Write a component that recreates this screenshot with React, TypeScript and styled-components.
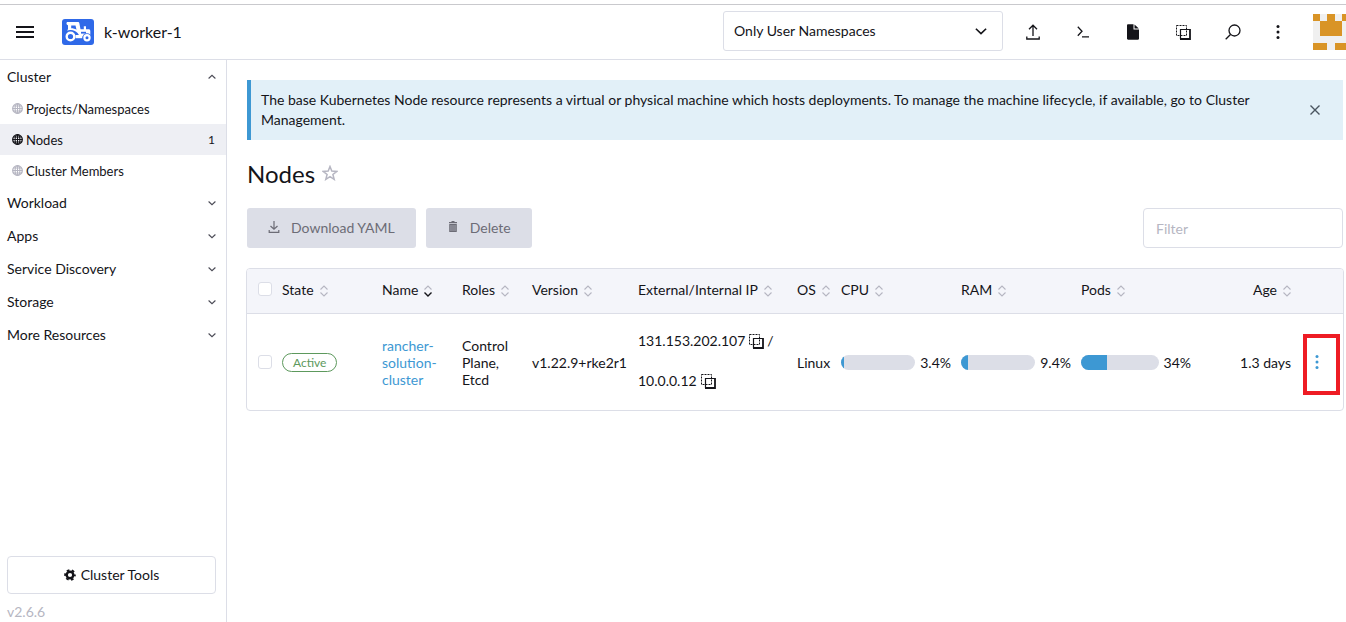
import React from "react";
import styled, { createGlobalStyle } from "styled-components";

const color = {
  text: "#141419",
  border: "#dcdee7",
  muted: "#b6b6c2",
  blue: "#3d98d3",
  green: "#5d995d",
  hoverRow: "#eeeff4",
  disabledText: "#6c6c76",
};

const GlobalStyle = createGlobalStyle`
  *, *::before, *::after { box-sizing: border-box; }
  body {
    margin: 0;
    background: #fff;
    color: ${color.text};
    font-family: Lato, "Open Sans", sans-serif;
    font-size: 14px;
    line-height: 20px;
  }
  button, input, select { font: inherit; color: inherit; margin: 0; }
  svg { display: block; flex: none; }
`;

const Page = styled.div`
  display: flex;
  flex-direction: column;
  min-height: 100vh;
  padding-top: 4px;
`;

const Header = styled.header`
  display: flex;
  align-items: center;
  height: 56px;
  border-top: 1px solid #c9c9cd;
  border-bottom: 1px solid ${color.border};
`;

const IconButton = styled.button<{ $width?: number }>`
  display: flex;
  align-items: center;
  justify-content: center;
  width: ${(p) => p.$width ?? 50}px;
  height: 40px;
  padding: 0;
  border: 0;
  background: none;
  cursor: pointer;
`;

const Brand = styled.a`
  display: flex;
  align-items: center;
  gap: 10px;
  margin-left: 12px;
  font-size: 16px;
  color: inherit;
  text-decoration: none;
`;

const HeaderTools = styled.div`
  display: flex;
  align-items: center;
  margin-left: auto;
`;

const NamespaceField = styled.div`
  position: relative;
  width: 280px;
  margin-right: 5px;
  margin-bottom: 2px;
  svg { position: absolute; right: 16px; top: 14px; pointer-events: none; }
`;

const NamespaceSelect = styled.select`
  appearance: none;
  width: 100%;
  height: 40px;
  padding: 0 40px 0 10px;
  border: 1px solid ${color.border};
  border-radius: 3px;
  background: #fff;
`;

const Avatar = styled.div`
  width: 33px;
  height: 36px;
  margin-left: 15px;
  overflow: hidden;
`;

const Body = styled.div`
  display: flex;
  flex: 1;
`;

const Sidebar = styled.nav`
  display: flex;
  flex-direction: column;
  flex: none;
  width: 227px;
  border-right: 1px solid ${color.border};
`;

const GroupButton = styled.button`
  display: flex;
  align-items: center;
  justify-content: space-between;
  width: 100%;
  height: 33px;
  padding: 0 10px 0 7px;
  border: 0;
  background: none;
  text-align: left;
  cursor: pointer;
`;

const ItemList = styled.ul`
  margin: 0;
  padding: 0;
  list-style: none;
`;

const ItemLink = styled.a<{ $active?: boolean }>`
  display: flex;
  align-items: center;
  gap: 3px;
  height: 31px;
  padding: 0 11px 0 12px;
  font-size: 13px;
  color: ${color.text};
  text-decoration: none;
  background: ${(p) => (p.$active ? color.hoverRow : "transparent")};
  svg { color: ${(p) => (p.$active ? color.text : color.muted)}; }
`;

const ItemCount = styled.span`
  margin-left: auto;
  font-size: 12px;
`;

const SidebarFooter = styled.div`
  margin-top: auto;
  padding: 0 10px 0 7px;
`;

const ToolsButton = styled.button`
  display: flex;
  align-items: center;
  justify-content: center;
  gap: 5px;
  width: 100%;
  height: 38px;
  border: 1px solid ${color.border};
  border-radius: 4px;
  background: #fff;
  cursor: pointer;
`;

const Version = styled.div`
  padding-top: 8px;
  color: ${color.muted};
`;

const Main = styled.main`
  flex: 1;
  min-width: 0;
  padding: 20px 3px 20px 20px;
`;

const Banner = styled.div`
  display: flex;
  align-items: center;
  justify-content: space-between;
  gap: 30px;
  padding: 10px 20px 10px 10px;
  border-left: 4px solid ${color.blue};
  background: #e2f0f8;
`;

const Title = styled.h1`
  display: flex;
  align-items: center;
  gap: 7px;
  margin: 20px 0;
  font-size: 24px;
  font-weight: 400;
  line-height: 28px;
  svg { margin-bottom: 2px; }
`;

const Toolbar = styled.div`
  display: flex;
  align-items: center;
  gap: 10px;
  margin-bottom: 20px;
`;

const ActionButton = styled.button`
  display: flex;
  align-items: center;
  gap: 10px;
  height: 40px;
  padding: 0 21px 0 20px;
  border: 0;
  border-radius: 3px;
  background: ${color.border};
  color: ${color.disabledText};
  svg { margin-bottom: 2px; }
`;

const FilterInput = styled.input`
  width: 200px;
  height: 40px;
  margin-left: auto;
  padding: 0 12px;
  border: 1px solid ${color.border};
  border-radius: 4px;
  background: #fff;
  &::placeholder { color: ${color.muted}; opacity: 1; }
`;

const TableFrame = styled.div`
  margin: 0 -1px;
  border: 1px solid ${color.border};
  border-radius: 4px;
  overflow: hidden;
`;

const Table = styled.table`
  width: 100%;
  table-layout: fixed;
  border-spacing: 0;
  line-height: 17px;
`;

const Col = styled.col<{ $width?: number }>`
  width: ${(p) => (p.$width ? `${p.$width}px` : "auto")};
`;

const HeadCell = styled.th<{ $right?: boolean }>`
  height: 45px;
  padding: 0 5px 4px;
  border-bottom: 1px solid ${color.border};
  background: #f4f5fa;
  font-weight: 400;
  text-align: left;
  button { margin-left: ${(p) => (p.$right ? "auto" : "0")}; }
`;

const SortButton = styled.button`
  display: flex;
  align-items: center;
  gap: 6px;
  padding: 0;
  border: 0;
  background: none;
  white-space: nowrap;
  svg { margin-top: 3px; }
`;

const Cell = styled.td<{ $right?: boolean }>`
  position: relative;
  height: 96px;
  padding: 0 5px;
  text-align: ${(p) => (p.$right ? "right" : "left")};
`;

const CheckHeadCell = styled(HeadCell)`
  padding: 0 0 4px 11px;
`;

const CheckCell = styled(Cell)`
  padding: 0 0 0 11px;
`;

const Checkbox = styled.input`
  display: block;
  appearance: none;
  width: 14px;
  height: 14px;
  margin: 0;
  border: 1px solid ${color.border};
  border-radius: 3px;
  background: #fff;
`;

const Badge = styled.span`
  display: inline-block;
  padding: 0 10px;
  border: 1px solid ${color.green};
  border-radius: 10px;
  color: ${color.green};
  font-size: 12px;
`;

const NodeLink = styled.a`
  color: ${color.blue};
  text-decoration: none;
`;

const IpCell = styled(Cell)`
  padding-bottom: 4px;
`;

const IpLine = styled.div`
  display: flex;
  align-items: center;
  gap: 3px;
  height: 40px;
`;

const CopyButton = styled.button`
  padding: 2px 0 0;
  border: 0;
  background: none;
  cursor: pointer;
`;

const Usage = styled.div`
  display: flex;
  align-items: center;
  gap: 5px;
`;

const Track = styled.div`
  flex: 1;
  height: 15px;
  border-radius: 8px;
  background: ${color.border};
  overflow: hidden;
`;

const Fill = styled.div`
  height: 100%;
  background: ${color.blue};
`;

const RowMenuButton = styled(IconButton)`
  color: ${color.blue};
`;

const Highlight = styled.div`
  position: absolute;
  top: 20px;
  left: 7px;
  width: 37px;
  height: 61px;
  border: 4px solid #ee1c24;
  pointer-events: none;
`;

const MenuIcon = () => (
  <svg width="18" height="12" viewBox="0 0 18 12" fill="currentColor">
    <path d="M0 0h18v2H0zM0 5h18v2H0zM0 10h18v2H0z" />
  </svg>
);

const TractorLogo = () => (
  <svg width="32" height="26" viewBox="0 0 32 26">
    <rect width="32" height="26" rx="3" fill="#2f69e8" />
    <path
      d="M5.500 3h10.700c.6 0 1 .4 1.100 1l1.200 6.200h3.300V7.300h2.200v2.900h2.600c1 0 1.700.7 1.700 1.700v5.300H17.500c0 0-2-6.200-9-6.200-1.500 0-2.600.3-3.300.8l.8-1.800V6.200c-1 0-1.500-1-1.500-1.700C4.500 3.500 4.800 3 5.500 3z"
      fill="#fff"
    />
    <path d="M9.200 6.500h4.300l1 4.200c-1.500-1-3.300-1.500-5.300-1.500z" fill="#2f69e8" />
    <path d="M19 12.800h5v1.800h-5z" fill="#2f69e8" />
    <circle cx="8.500" cy="17.500" r="6" fill="#2f69e8" />
    <circle cx="8.500" cy="17.500" r="3.800" fill="none" stroke="#fff" strokeWidth="2.400" />
    <path d="M13.500 16h7v3.200h-7z" fill="#fff" />
    <circle cx="25" cy="18.800" r="4.600" fill="#2f69e8" />
    <circle cx="25" cy="18.800" r="2.600" fill="none" stroke="#fff" strokeWidth="2.200" />
  </svg>
);

const Chevron = ({ size = 8, up = false, bold = false }: { size?: number; up?: boolean; bold?: boolean }) => (
  <svg width={size} height={size} viewBox="0 0 8 8" fill="none" stroke={bold ? color.text : "#4a4a55"} strokeWidth="1.100">
    <path d={up ? "M.6 5.500 4 2.300l3.400 3.200" : "M.6 2.500 4 5.700l3.400-3.200"} />
  </svg>
);

const UploadIcon = () => (
  <svg width="14" height="16" viewBox="0 0 14 16" fill="none" stroke="currentColor" strokeWidth="1.300">
    <path d="M7 12V1.500M3 5.200l4-4 4 4M.8 12.500V15h12.400v-2.500" />
  </svg>
);

const ShellIcon = () => (
  <svg width="12" height="12" viewBox="0 0 12 12" fill="none" stroke="currentColor" strokeWidth="1.300">
    <path d="M.8.8 5 5.300.8 9.800M5 10.800h7" />
  </svg>
);

const FileIcon = () => (
  <svg width="12" height="16" viewBox="0 0 12 16" fill="currentColor">
    <path d="M0 1.500C0 .6.5.3 1.200.3H6.500V5.500H12v9c0 .8-.4 1.200-1.200 1.200H1.200C.4 15.700 0 15.300 0 14.500zM7.500.5 11.800 4.600H7.500z" />
  </svg>
);

const CopyIcon = () => (
  <svg width="16" height="16" viewBox="0 0 16 16" fill="none" stroke="currentColor">
    <rect x="1.500" y="1.500" width="10" height="10" strokeWidth="1" strokeDasharray="2 1" />
    <path d="M5.500 15V5.500H15" strokeWidth="1.200" />
    <path d="M15 5v10H5" strokeWidth="1.800" />
  </svg>
);

const SearchIcon = () => (
  <svg width="16" height="16" viewBox="0 0 16 16" fill="none" stroke="currentColor" strokeWidth="1.300">
    <circle cx="9.500" cy="6.500" r="5.500" />
    <path d="M5.500 10.500.7 15.300" />
  </svg>
);

const DotsIcon = () => (
  <svg width="4" height="14" viewBox="0 0 4 14" fill="currentColor">
    <circle cx="2" cy="1.600" r="1.500" />
    <circle cx="2" cy="7" r="1.500" />
    <circle cx="2" cy="12.400" r="1.500" />
  </svg>
);

const Identicon = () => (
  <svg width="36" height="36" viewBox="0 0 5 5" shapeRendering="crispEdges">
    <rect width="5" height="5" fill="#f0f0f0" />
    <path d="M0 0h1v1H0zM2 0h1v1h1v2H1V1h1zM4 0h1v1H4zM0 4h2v1H0zM3 4h2v1H3z" fill="#d99426" />
  </svg>
);

const GlobeIcon = () => (
  <svg width="11" height="11" viewBox="0 0 11 11" fill="none" stroke="currentColor">
    <circle cx="5.500" cy="5.500" r="4.800" strokeWidth="1.300" />
    <ellipse cx="5.500" cy="5.500" rx="2.400" ry="4.800" strokeWidth="1.100" />
    <path d="M5.500.5v10M.8 5.500h9.400M1.500 3h8M1.500 8h8" />
  </svg>
);

const GearIcon = () => (
  <svg width="12" height="12" viewBox="0 0 12 12" fill="none" stroke="currentColor">
    <circle cx="6" cy="6" r="3.300" strokeWidth="2.400" />
    <circle cx="6" cy="6" r="4.900" strokeWidth="1.800" strokeDasharray="2.600 2.530" strokeDashoffset="1.300" />
  </svg>
);

const CloseIcon = () => (
  <svg width="10" height="10" viewBox="0 0 10 10" fill="none" stroke="#4a5560" strokeWidth="1.400">
    <path d="m.5.5 9 9M9.500.5l-9 9" />
  </svg>
);

const StarIcon = () => (
  <svg width="16" height="16" viewBox="0 0 16 16" fill="none" stroke={color.muted} strokeWidth="1.500">
    <path d="m8 1.500 1.800 4.600 5 .3-3.900 3.100 1.300 4.900L8 11.700l-4.200 2.700 1.300-4.900L1.200 6.400l5-.3z" />
  </svg>
);

const DownloadIcon = () => (
  <svg width="14" height="14" viewBox="0 0 14 14" fill="none" stroke="currentColor" strokeWidth="1.200">
    <path d="M7 1v8M3.500 6 7 9.300 10.500 6M2.200 10v2.300h9.600V10" />
  </svg>
);

const TrashIcon = () => (
  <svg width="14" height="14" viewBox="0 0 14 14">
    <path d="M3 2.700h8M5.500 1.700h3" stroke="currentColor" strokeWidth="1.300" />
    <path d="M3.800 4.500h6.400v7H3.800z" fill="#9a9ba6" stroke="currentColor" strokeWidth="1.100" />
    <path d="M6 5v6M8 5v6" stroke="currentColor" strokeWidth=".8" />
  </svg>
);

const SortIcon = ({ active }: { active?: boolean }) => (
  <svg width="8" height="12" viewBox="0 0 8 12" fill="none" stroke={color.muted} strokeWidth="1.100">
    <path d="M.5 4.500 4 1l3.500 3.500" />
    <path d="M.5 7.500 4 11l3.500-3.500" stroke={active ? color.text : color.muted} strokeWidth={active ? 1.4 : 1.1} />
  </svg>
);

const columns: { label: string; width?: number; sorted?: boolean; right?: boolean }[] = [
  { label: "State", width: 100 },
  { label: "Name", width: 80, sorted: true },
  { label: "Roles", width: 70 },
  { label: "Version", width: 106 },
  { label: "External/Internal IP" },
  { label: "OS", width: 44 },
  { label: "CPU", width: 120 },
  { label: "RAM", width: 120 },
  { label: "Pods", width: 120 },
  { label: "Age", width: 100, right: true },
];

const clusterItems = [
  { label: "Projects/Namespaces" },
  { label: "Nodes", count: 1, active: true },
  { label: "Cluster Members" },
];

const closedGroups = ["Workload", "Apps", "Service Discovery", "Storage", "More Resources"];

const usage = [
  { name: "CPU", value: 3.4 },
  { name: "RAM", value: 9.4 },
  { name: "Pods", value: 34 },
];

export default function App() {
  return (
    <Page>
      <GlobalStyle />
      <Header>
        <IconButton aria-label="Main menu"><MenuIcon /></IconButton>
        <Brand href="#"><TractorLogo />k-worker-1</Brand>
        <HeaderTools>
          <NamespaceField>
            <NamespaceSelect aria-label="Namespaces">
              <option>Only User Namespaces</option>
            </NamespaceSelect>
            <Chevron size={12} bold />
          </NamespaceField>
          <IconButton aria-label="Import YAML"><UploadIcon /></IconButton>
          <IconButton aria-label="Kubectl shell"><ShellIcon /></IconButton>
          <IconButton aria-label="Download KubeConfig"><FileIcon /></IconButton>
          <IconButton aria-label="Copy KubeConfig"><CopyIcon /></IconButton>
          <IconButton aria-label="Search"><SearchIcon /></IconButton>
          <IconButton aria-label="More actions" $width={40}><DotsIcon /></IconButton>
          <Avatar><Identicon /></Avatar>
        </HeaderTools>
      </Header>
      <Body>
        <Sidebar>
          <GroupButton aria-expanded>Cluster<Chevron up /></GroupButton>
          <ItemList>
            {clusterItems.map((item) => (
              <li key={item.label}>
                <ItemLink href="#" $active={item.active}>
                  <GlobeIcon />
                  {item.label}
                  {item.count && <ItemCount>{item.count}</ItemCount>}
                </ItemLink>
              </li>
            ))}
          </ItemList>
          {closedGroups.map((group) => (
            <GroupButton key={group}>{group}<Chevron /></GroupButton>
          ))}
          <SidebarFooter>
            <ToolsButton><GearIcon />Cluster Tools</ToolsButton>
            <Version>v2.6.6</Version>
          </SidebarFooter>
        </Sidebar>
        <Main>
          <Banner>
            <span>
              The base Kubernetes Node resource represents a virtual or physical machine which hosts deployments. To
              manage the machine lifecycle, if available, go to Cluster Management.
            </span>
            <IconButton aria-label="Close" $width={18}><CloseIcon /></IconButton>
          </Banner>
          <Title>Nodes<StarIcon /></Title>
          <Toolbar>
            <ActionButton disabled><DownloadIcon />Download YAML</ActionButton>
            <ActionButton disabled><TrashIcon />Delete</ActionButton>
            <FilterInput type="search" placeholder="Filter" aria-label="Filter" />
          </Toolbar>
          <TableFrame>
            <Table>
              <colgroup>
                <Col $width={30} />
                {columns.map((c) => <Col key={c.label} $width={c.width} />)}
                <Col $width={47} />
              </colgroup>
              <thead>
                <tr>
                  <CheckHeadCell><Checkbox type="checkbox" aria-label="Select all" /></CheckHeadCell>
                  {columns.map((c) => (
                    <HeadCell key={c.label} $right={c.right}>
                      <SortButton>{c.label}<SortIcon active={c.sorted} /></SortButton>
                    </HeadCell>
                  ))}
                  <HeadCell />
                </tr>
              </thead>
              <tbody>
                <tr>
                  <CheckCell><Checkbox type="checkbox" aria-label="Select rancher-solution-cluster" /></CheckCell>
                  <Cell><Badge>Active</Badge></Cell>
                  <Cell><NodeLink href="#">rancher-solution-cluster</NodeLink></Cell>
                  <Cell>Control Plane, Etcd</Cell>
                  <Cell>v1.22.9+rke2r1</Cell>
                  <IpCell>
                    <IpLine>131.153.202.107<CopyButton aria-label="Copy external IP"><CopyIcon /></CopyButton>/</IpLine>
                    <IpLine>10.0.0.12<CopyButton aria-label="Copy internal IP"><CopyIcon /></CopyButton></IpLine>
                  </IpCell>
                  <Cell>Linux</Cell>
                  {usage.map((u) => (
                    <Cell key={u.name}>
                      <Usage>
                        <Track><Fill style={{ width: `${u.value}%` }} /></Track>
                        {u.value}%
                      </Usage>
                    </Cell>
                  ))}
                  <Cell $right>1.3 days</Cell>
                  <Cell>
                    <RowMenuButton $width={32} aria-label="Row actions"><DotsIcon /></RowMenuButton>
                    <Highlight />
                  </Cell>
                </tr>
              </tbody>
            </Table>
          </TableFrame>
        </Main>
      </Body>
    </Page>
  );
}
